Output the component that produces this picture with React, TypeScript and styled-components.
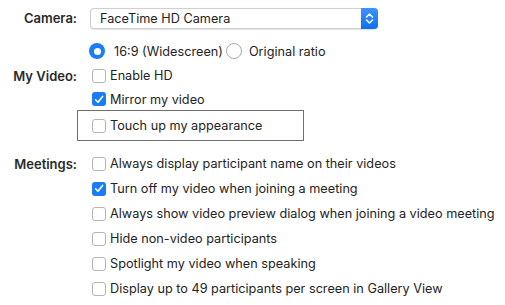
import React from "react";
import styled, { createGlobalStyle } from "styled-components";

const GlobalStyle = createGlobalStyle`
  html, body {
    margin: 0;
    padding: 0;
    background: #ffffff;
  }
  body {
    font-family: Inter, "Liberation Sans", Arial, sans-serif;
    font-size: 12.7px;
    color: #242424;
  }
`;

const Page = styled.div`
  width: 505px;
  height: 305px;
  padding-top: 7px;
  box-sizing: border-box;
  overflow: hidden;
`;

const Row = styled.div<{ $h: number; $gapTop?: number }>`
  display: grid;
  grid-template-columns: 77px 1fr;
  column-gap: 13px;
  align-items: center;
  height: ${(p) => p.$h}px;
  margin-top: ${(p) => p.$gapTop ?? 0}px;
`;

const Label = styled.div`
  text-align: right;
  font-weight: 600;
  font-size: 13px;
  color: #2a2a2a;
  white-space: nowrap;
`;

const Select = styled.div`
  position: relative;
  width: 288px;
  height: 21px;
  box-sizing: border-box;
  border: 1px solid #cfcfcf;
  border-radius: 4px;
  background: #fff;
  box-shadow: 0 0.5px 1px rgba(0, 0, 0, 0.12);
  display: flex;
  align-items: center;
  padding-left: 9px;
`;

const Stepper = styled.div`
  position: absolute;
  right: -1px;
  top: -1px;
  bottom: -1px;
  width: 17px;
  border-radius: 0 4px 4px 0;
  background: linear-gradient(#3d93fb, #0f6ff5);
  display: flex;
  align-items: center;
  justify-content: center;
`;

const Options = styled.div`
  display: flex;
  align-items: center;
  white-space: nowrap;
`;

const Option = styled.label`
  display: inline-flex;
  align-items: center;
  white-space: nowrap;
`;

const Radio = styled.span<{ $on?: boolean }>`
  width: 16px;
  height: 16px;
  box-sizing: border-box;
  border-radius: 50%;
  margin-right: ${(p) => (p.$on ? 9 : 7)}px;
  margin-left: ${(p) => (p.$on ? -1 : 3)}px;
  display: inline-flex;
  align-items: center;
  justify-content: center;
  background: ${(p) => (p.$on ? "#1a7cf6" : "#fff")};
  border: ${(p) => (p.$on ? "none" : "1px solid #a9a9a9")};
  &::after {
    content: "";
    display: ${(p) => (p.$on ? "block" : "none")};
    width: 7px;
    height: 7px;
    border-radius: 50%;
    background: #fff;
  }
`;

const Box = styled.span<{ $on?: boolean }>`
  width: 14px;
  height: 14px;
  box-sizing: border-box;
  border-radius: 3px;
  margin-left: 2px;
  margin-right: 4px;
  display: inline-flex;
  align-items: center;
  justify-content: center;
  background: ${(p) => (p.$on ? "#1a7cf6" : "#fff")};
  border: ${(p) => (p.$on ? "none" : "1px solid #b4b4b4")};
`;

const Highlight = styled.div`
  margin-left: -13px;
  width: 227px;
  height: 31px;
  box-sizing: border-box;
  border: 1px solid #6e6e6e;
  padding-left: 14px;
  display: flex;
  align-items: center;
`;

const Check = () => (
  <svg width="10" height="9" viewBox="0 0 10 9">
    <path d="M1.6 4.8 L4 7.2 L8.6 1.4" fill="none" stroke="#fff" strokeWidth="1.6" strokeLinecap="round" strokeLinejoin="round" />
  </svg>
);

const CheckBox = ({ on, text }: { on?: boolean; text: string }) => (
  <Option>
    <Box $on={on}>{on && <Check />}</Box>
    {text}
  </Option>
);

const meetings: [string, boolean][] = [
  ["Always display participant name on their videos", false],
  ["Turn off my video when joining a meeting", true],
  ["Always show video preview dialog when joining a video meeting", false],
  ["Hide non-video participants", false],
  ["Spotlight my video when speaking", false],
  ["Display up to 49 participants per screen in Gallery View", false],
];

export default function App() {
  return (
    <Page>
      <GlobalStyle />
      <Row $h={22}>
        <Label>Camera:</Label>
        <Select>
          FaceTime HD Camera
          <Stepper>
            <svg width="9" height="13" viewBox="0 0 9 13">
              <path d="M1.5 5 L4.5 2 L7.5 5 M1.5 8 L4.5 11 L7.5 8" fill="none" stroke="#fff" strokeWidth="1.5" strokeLinecap="round" strokeLinejoin="round" />
            </svg>
          </Stepper>
        </Select>
      </Row>

      <Row $h={24} $gapTop={10}>
        <div />
        <Options>
          <Option>
            <Radio $on />
            16:9 (Widescreen)
          </Option>
          <Option>
            <Radio />
            Original ratio
          </Option>
        </Options>
      </Row>
      <Row $h={25}>
        <Label>My Video:</Label>
        <CheckBox text="Enable HD" />
      </Row>
      <Row $h={22}>
        <div />
        <CheckBox on text="Mirror my video" />
      </Row>
      <Row $h={31}>
        <div />
        <Highlight>
          <Option>
            <Box style={{ marginLeft: 0 }} />
            Touch up my appearance
          </Option>
        </Highlight>
      </Row>

      {meetings.map(([text, on], i) => (
        <Row key={text} $h={25} $gapTop={i === 0 ? 10 : 0}>
          {i === 0 ? <Label>Meetings:</Label> : <div />}
          <CheckBox on={on} text={text} />
        </Row>
      ))}
    </Page>
  );
}
